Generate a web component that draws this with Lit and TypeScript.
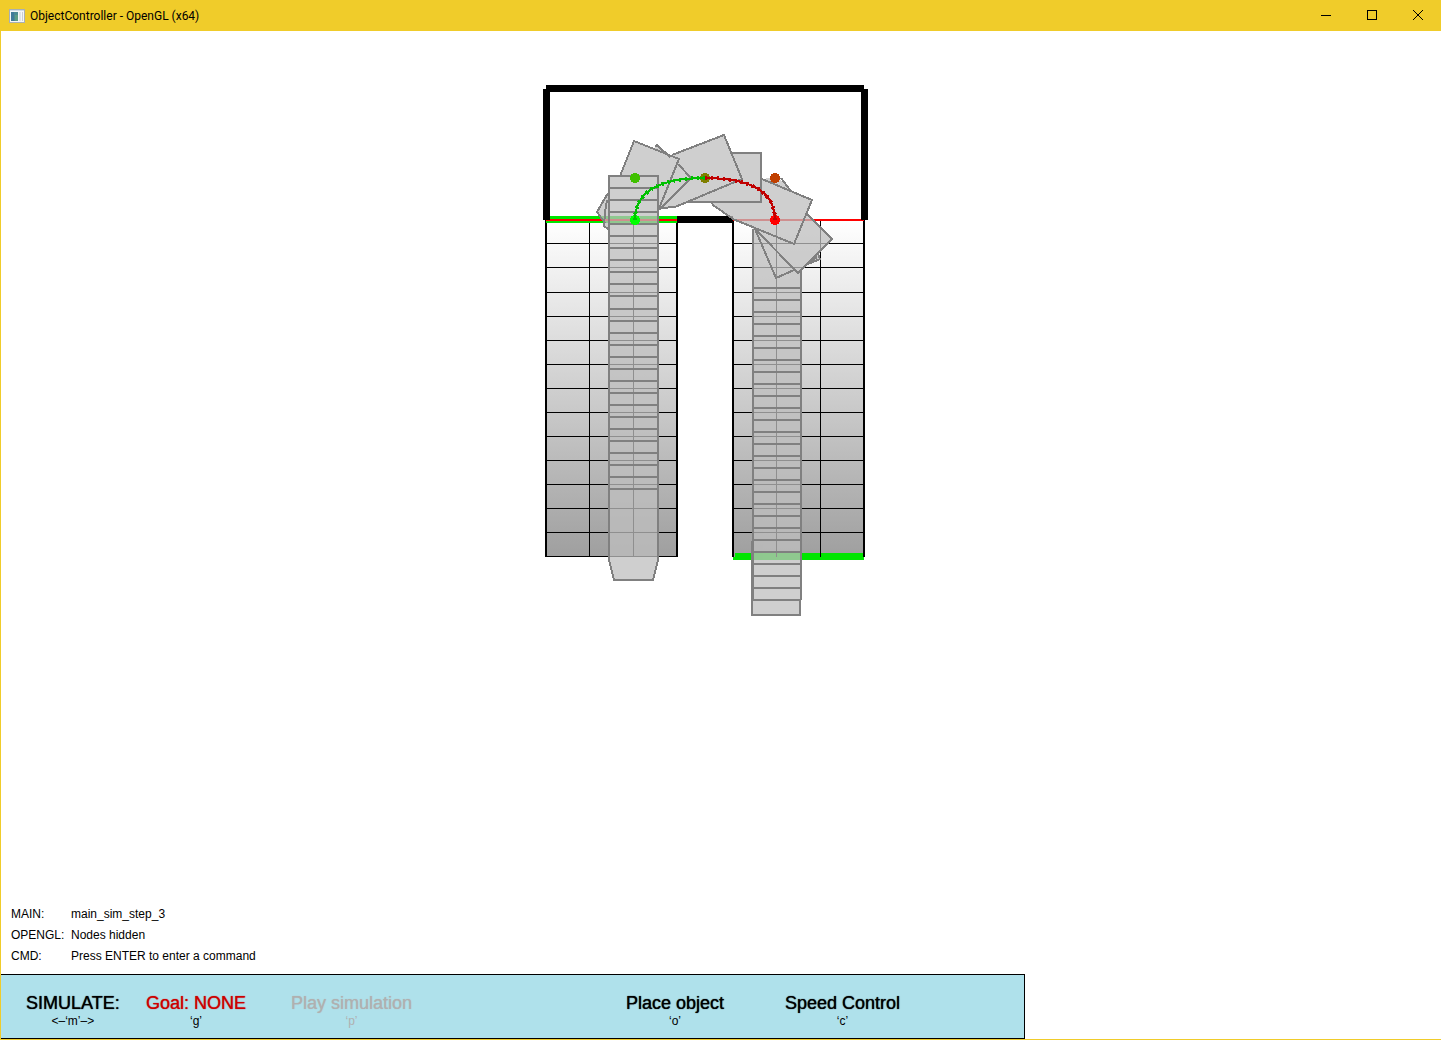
import { LitElement, html, svg, css } from "lit";
import { customElement, state } from "lit/decorators.js";

const range = (from: number, to: number, step: number): number[] => {
  const out: number[] = [];
  for (let v = from; v <= to; v += step) out.push(v);
  return out;
};

/* Shelf rows shared by both aisles. */
const ROWS = [243, 267, ...range(292, 388, 24), ...range(412, 532, 24)];

/* Successive poses of the vehicle while it drives straight. */
const LEFT_POSES = [...range(187, 295, 12), ...range(308, 488, 12)];
const RIGHT_POSES = range(287, 599, 12);

/* Bodies of the vehicle along its path. */
const BODIES = [
  "609,176 658,176 658,560 653,580 614,580 609,560",
  "753,220 801,220 801,600 800,600 800,615 752,615 752,542 753,542",
  "634,141 679,159 658,211 609,211 620,176",
  "655,147 657,145 691,178 658,211 640,190",
  "608,193 597,212 605,222 604,226 609,229",
  "724,135 742,179 700,196 687,202 675,207 658,209 658,170 672,155",
  "700,153 761,153 761,202 687,202",
  "712,203 713,205 733,219 794,244 812,200 762,179 755,180 730,190",
  "778,177 790,190 775,190 762,179",
  "807,214 832,239 798,273 755,229 780,214",
  "755,229 776,278 820,259 818,254 780,220",
];

/* Edges of those bodies that no later body covers. */
const EDGES = [
  "620,176 634,141 679,159 658,211",
  "655,147 657,145 670,157",
  "678,164 691,178 659,210",
  "608,193 597,212 605,223",
  "607,200 605,212 604,226 608,229",
  "672,155 724,135 742,179 687,202 675,207 662,208",
  "732,153 761,153 761,202 687,202",
  "712,203 713,205 733,219 794,244 812,200 762,179",
  "781,178 790,190",
  "807,214 832,239 798,273 755,229",
  "755,229 776,278 794,270",
  "818,254 820,259 808,264 817,257",
];

const NODES: [number, number, string][] = [
  [635, 178, "#40c000"],
  [635, 220, "#00ff00"],
  [705, 178, "#808000"],
  [775, 178, "#c04000"],
  [775, 220, "#ff0000"],
];

@customElement("sim-scene")
class SimScene extends LitElement {
  static styles = css`
    :host {
      display: block;
    }
    svg {
      display: block;
      width: 340px;
      height: 540px;
    }
    .wall {
      fill: #000;
    }
    .goal {
      fill: #00e600;
    }
    .stop {
      fill: #ff0000;
    }
    .line {
      fill: #000;
    }
    .bodies {
      fill: #bfbfbf;
      opacity: 0.75;
    }
    .pose {
      fill: #808080;
    }
    .edge {
      fill: none;
      stroke: #808080;
      stroke-width: 2;
    }
    .path {
      fill: none;
      stroke-width: 2;
    }
    .ticks {
      fill: none;
      stroke-width: 4;
      stroke-dasharray: 2 4;
    }
    .out {
      stroke: #00c000;
    }
    .back {
      stroke: #c00000;
    }
  `;

  private aisle(left: number, lines: number[]) {
    return svg`
      <rect x=${left} y="220" width="131" height="337" fill="url(#depth)"></rect>
      ${ROWS.map((y) => svg`<rect class="line" x=${left} y=${y} width="131" height="1"></rect>`)}
      ${lines.map((x) => svg`<rect class="line" x=${x} y="220" width="1" height="337"></rect>`)}
      <rect class="line" x=${left - 1} y="220" width="2" height="337"></rect>
      <rect class="line" x=${left + 130} y="220" width="2" height="337"></rect>`;
  }

  render() {
    const out = "M635 220Q635 178 705 178";
    const back = "M705 178Q775 178 775 220";
    return html`
      <svg viewBox="536 80 340 540" role="img" aria-label="Vehicle path" shape-rendering="crispEdges">
        <defs>
          <linearGradient id="depth" x1="0" y1="0" x2="0" y2="1">
            <stop offset="0" stop-color="#ffffff"></stop>
            <stop offset="1" stop-color="#9f9f9f"></stop>
          </linearGradient>
        </defs>
        <rect class="goal" x="733" y="553" width="131" height="7"></rect>
        ${this.aisle(546, [589, 633])}
        <rect class="line" x="546" y="556" width="131" height="1"></rect>
        ${this.aisle(733, [776, 820])}
        <rect class="goal" x="735" y="553" width="41" height="7"></rect>
        <rect class="goal" x="777" y="553" width="43" height="7"></rect>
        <rect class="goal" x="821" y="553" width="42" height="7"></rect>
        <rect class="goal" x="546" y="216" width="131" height="7"></rect>
        <rect class="stop" x="546" y="219" width="131" height="2"></rect>
        <rect class="stop" x="733" y="219" width="131" height="2"></rect>
        <rect class="wall" x="546" y="85" width="318" height="7"></rect>
        <rect class="wall" x="543" y="89" width="7" height="131"></rect>
        <rect class="wall" x="861" y="89" width="7" height="131"></rect>
        <rect class="wall" x="677" y="216" width="56" height="7"></rect>

        <g class="bodies">${BODIES.map((p) => svg`<polygon points=${p}></polygon>`)}</g>

        ${EDGES.map((p) => svg`<polyline class="edge" points=${p}></polyline>`)}
        ${LEFT_POSES.map((y) => svg`<rect class="pose" x="609" y=${y} width="49" height="2"></rect>`)}
        <polygon class="edge" points="609,176 658,176 658,560 653,580 614,580 609,560"></polygon>
        ${RIGHT_POSES.map((y) => svg`<rect class="pose" x="753" y=${y} width="48" height="2"></rect>`)}
        <rect class="pose" x="752" y="229" width="2" height="372"></rect>
        <rect class="pose" x="800" y="271" width="2" height="329"></rect>
        <polyline class="edge" points="752,541 752,615 800,615 800,600"></polyline>

        ${NODES.map(([x, y, c]) => svg`<circle cx=${x} cy=${y} r="5" fill=${c}></circle>`)}
        <path class="path out" d=${out}></path>
        <path class="ticks out" d=${out}></path>
        <path class="path back" d=${back}></path>
        <path class="ticks back" d=${back}></path>
      </svg>
    `;
  }
}

interface Command {
  label: string;
  key: string;
  kind?: "alert";
  disabled?: boolean;
}

@customElement("app-root")
class AppRoot extends LitElement {
  static styles = css`
    :host {
      display: flex;
      flex-direction: column;
      box-sizing: border-box;
      min-height: 100vh;
      background: #fff;
      border: solid #f0cc2a;
      border-width: 0 0 1px 1px;
      color: #000;
      font-family: "Liberation Sans", Arial, sans-serif;
      font-size: 12px;
    }
    button {
      margin: 0;
      padding: 0;
      border: 0;
      background: none;
      color: inherit;
      font: inherit;
    }
    .titlebar {
      display: flex;
      align-items: center;
      height: 31px;
      padding-left: 8px;
      background: #f0cc2a;
    }
    .titlebar svg {
      display: block;
    }
    .title {
      flex: 1;
      margin: 0 0 0 5px;
      font-family: Roboto, "Open Sans", sans-serif;
      font-size: 12px;
      font-weight: 400;
    }
    .window-button {
      display: grid;
      place-items: center;
      width: 46px;
      height: 31px;
    }
    .viewport {
      flex: 1;
      display: flex;
      justify-content: center;
      padding: 49px 30px 0 0;
    }
    .status {
      display: grid;
      grid-template-columns: 60px 1fr;
      row-gap: 5px;
      margin: 0 0 10px;
      padding-left: 10px;
      line-height: 16px;
    }
    .status dt,
    .status dd {
      margin: 0;
      white-space: nowrap;
    }
    .commands {
      display: grid;
      grid-template-columns: 120px 145px 335px 159px 1fr;
      justify-items: start;
      align-items: start;
      box-sizing: border-box;
      width: 100%;
      max-width: 1024px;
      height: 65px;
      padding: 18px 0 0 25px;
      border: solid #000;
      border-width: 1px 1px 1px 0;
      background: #afe1eb;
    }
    .command {
      display: flex;
      flex-direction: column;
      align-items: center;
      white-space: nowrap;
    }
    .label {
      font-size: 18px;
      line-height: 20px;
      text-shadow: 0 0 1px currentColor;
    }
    .key {
      font-size: 12px;
      line-height: 16px;
    }
    .alert .label {
      color: #cc0000;
    }
    .command:disabled {
      color: #b0b0b0;
    }
  `;

  @state() private status: [string, string][] = [
    ["MAIN:", "main_sim_step_3"],
    ["OPENGL:", "Nodes hidden"],
    ["CMD:", "Press ENTER to enter a command"],
  ];

  private commands: Command[] = [
    { label: "SIMULATE:", key: "<–‘m’–>" },
    { label: "Goal: NONE", key: "‘g’", kind: "alert" },
    { label: "Play simulation", key: "‘p’", disabled: true },
    { label: "Place object", key: "‘o’" },
    { label: "Speed Control", key: "‘c’" },
  ];

  render() {
    return html`
      <header class="titlebar">
        <svg width="16" height="14" viewBox="0 0 16 14" aria-hidden="true" shape-rendering="crispEdges">
          <rect width="16" height="14" fill="#a9b0b4"></rect>
          <rect x="1" y="1" width="14" height="12" fill="#f4f6f8"></rect>
          <rect x="1" y="1" width="14" height="1" fill="#cfdbe6"></rect>
          <rect x="2" y="3" width="7" height="9" fill="#4a8a93"></rect>
          <rect x="2" y="3" width="3" height="9" fill="#3f7a9a"></rect>
          <rect x="6" y="6" width="3" height="6" fill="#5c9c84"></rect>
          <rect x="10" y="3" width="2" height="9" fill="#dfe3e6"></rect>
          <rect x="13" y="3" width="1" height="9" fill="#c9ced2"></rect>
        </svg>
        <h1 class="title">ObjectController - OpenGL (x64)</h1>
        <button class="window-button" aria-label="Minimize">
          <svg width="10" height="11" viewBox="0 0 10 11" shape-rendering="crispEdges">
            <rect y="5" width="10" height="1"></rect>
          </svg>
        </button>
        <button class="window-button" aria-label="Maximize">
          <svg width="10" height="11" viewBox="0 0 10 11" shape-rendering="crispEdges">
            <path d="M0 0H10V10H0ZM1 1V9H9V1Z" fill-rule="evenodd"></path>
          </svg>
        </button>
        <button class="window-button" aria-label="Close">
          <svg width="10" height="11" viewBox="0 0 10 11">
            <path d="M0 0L10 10M10 0L0 10" stroke="#000" fill="none"></path>
          </svg>
        </button>
      </header>
      <main class="viewport"><sim-scene></sim-scene></main>
      <dl class="status">
        ${this.status.map(([name, value]) => html`<dt>${name}</dt><dd>${value}</dd>`)}
      </dl>
      <nav class="commands" aria-label="Commands">
        ${this.commands.map(
          (c) => html`
            <button class="command ${c.kind ?? ""}" ?disabled=${c.disabled}>
              <span class="label">${c.label}</span>
              <span class="key">${c.key}</span>
            </button>
          `,
        )}
      </nav>
    `;
  }
}
